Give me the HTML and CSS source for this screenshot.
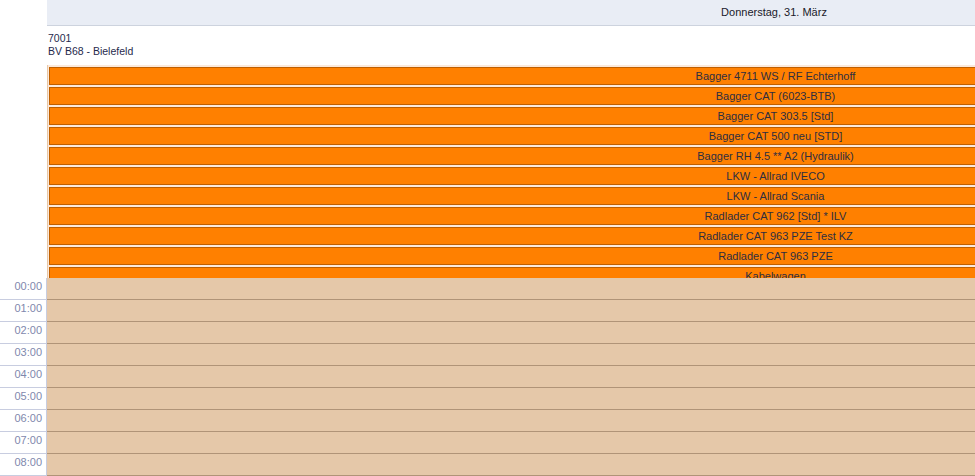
FILE: index.html
```html
<!DOCTYPE html>
<html lang="de">
<head>
    <meta charset="UTF-8">
    <meta name="viewport" content="width=device-width, initial-scale=1.0">
    <title>Disposition</title>
    <link rel="stylesheet" href="styles.css">
</head>
<body>
    <div class="page">
        <div class="top">
            <div class="corner"></div>
            <div class="day">
                <div class="day-header">Donnerstag, 31. März</div>
                <div class="site-info">
                    <div>7001</div>
                    <div>BV B68 - Bielefeld</div>
                </div>
                <div class="resources">
                    <div class="resource">Bagger 4711 WS / RF Echterhoff</div>
                    <div class="resource">Bagger CAT (6023-BTB)</div>
                    <div class="resource">Bagger CAT 303.5 [Std]</div>
                    <div class="resource">Bagger CAT 500 neu [STD]</div>
                    <div class="resource">Bagger RH 4.5 ** A2 (Hydraulik)</div>
                    <div class="resource">LKW - Allrad IVECO</div>
                    <div class="resource">LKW - Allrad Scania</div>
                    <div class="resource">Radlader CAT 962 [Std] * ILV</div>
                    <div class="resource">Radlader CAT 963 PZE Test KZ</div>
                    <div class="resource">Radlader CAT 963 PZE</div>
                    <div class="resource">Kabelwagen</div>
                </div>
            </div>
        </div>

        <div class="timeline">
            <div class="hour"><div class="hour-label">00:00</div><div class="slot"></div></div>
            <div class="hour"><div class="hour-label">01:00</div><div class="slot"></div></div>
            <div class="hour"><div class="hour-label">02:00</div><div class="slot"></div></div>
            <div class="hour"><div class="hour-label">03:00</div><div class="slot"></div></div>
            <div class="hour"><div class="hour-label">04:00</div><div class="slot"></div></div>
            <div class="hour"><div class="hour-label">05:00</div><div class="slot"></div></div>
            <div class="hour"><div class="hour-label">06:00</div><div class="slot"></div></div>
            <div class="hour"><div class="hour-label">07:00</div><div class="slot"></div></div>
            <div class="hour"><div class="hour-label">08:00</div><div class="slot"></div></div>
        </div>
    </div>
</body>
</html>
```

FILE: styles.css
```css
html, body {
    margin: 0;
    padding: 0;
    overflow: hidden;
    background: #fff;
}

body {
    font-family: "Liberation Sans", Arial, sans-serif;
    font-size: 11px;
    color: #1f2a4d;
}

.page {
    width: 975px;
    overflow: hidden;
}

.top {
    display: flex;
    height: 278px;
    overflow: hidden;
}

.corner {
    flex: 0 0 47px;
}

.day {
    flex: 0 0 1454px;
    display: flex;
    flex-direction: column;
}

.day-header {
    height: 25px;
    line-height: 25px;
    text-align: center;
    background: #e9edf5;
    border-bottom: 1px solid #cdd3de;
    color: #1a1a2a;
}

.site-info {
    height: 26px;
    padding: 6px 0 7px 1px;
    line-height: 13px;
    font-size: 10.5px;
}

.resources {
    flex: 1;
    padding: 2px 0 0 1px;
    background: #fbe9db;
    border-left: 1px solid #e8c7a7;
    overflow: hidden;
}

.resource {
    height: 16px;
    line-height: 16px;
    margin-bottom: 2px;
    text-align: center;
    background: #ff8000;
    border-top: 1px solid #bf5f00;
    border-bottom: 1px solid #bf5f00;
    border-left: 1px solid #bf5f00;
    color: #2e2e40;
    white-space: nowrap;
}

.hour {
    display: flex;
    height: 22px;
}

.hour-label {
    flex: 0 0 42px;
    padding: 2px 4px 0 0;
    text-align: right;
    color: #7f88ad;
    border-right: 1px solid #c8cde0;
    border-bottom: 1px solid #c8cde0;
    font-size: 11px;
    line-height: 13px;
}

.slot {
    flex: 1;
    background: #e5c8a9;
    border-bottom: 1px solid #b09478;
}
```
